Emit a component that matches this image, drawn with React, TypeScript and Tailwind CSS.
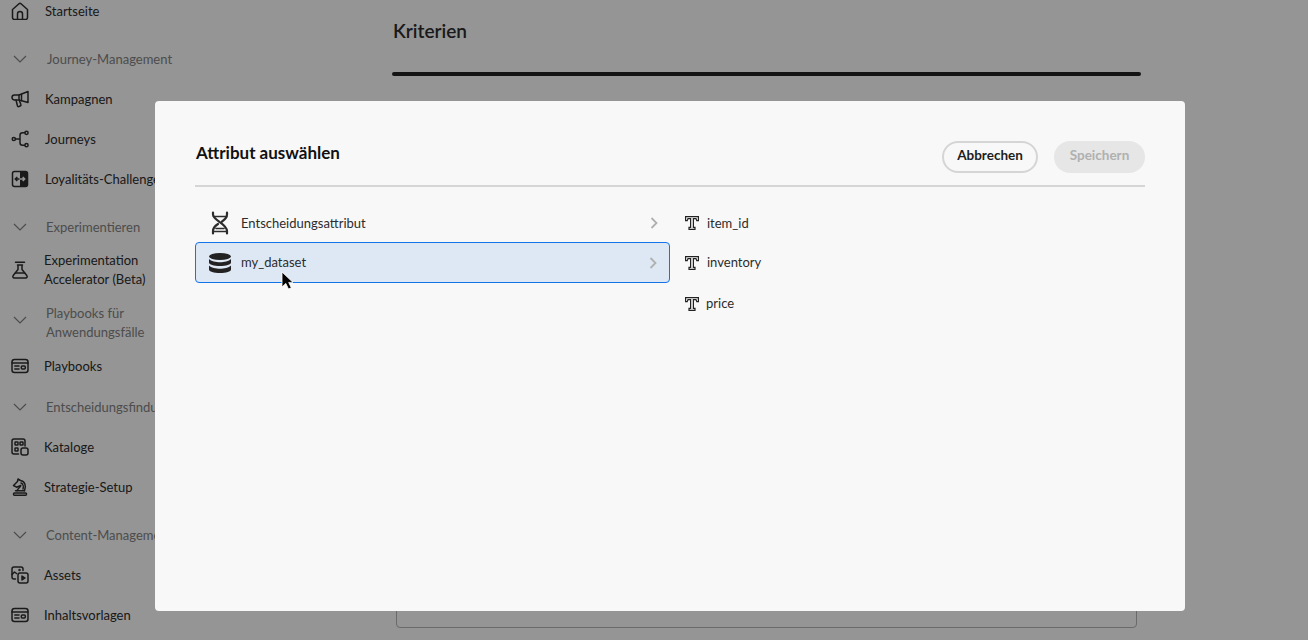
import type { ReactNode } from "react";

const stroke = {
  fill: "none",
  stroke: "currentColor",
  strokeWidth: 1.5,
  strokeLinecap: "round" as const,
  strokeLinejoin: "round" as const,
};

function Icon({ children }: { children: ReactNode }) {
  return (
    <svg viewBox="0 0 18 18" className="size-[18px] shrink-0" {...stroke}>
      {children}
    </svg>
  );
}

const HomeIcon = () => (
  <Icon>
    <path d="M1.500 7.500 8 1.800a1.500 1.500 0 0 1 2 0l6.500 5.700V15.500a2 2 0 0 1-2 2h-11a2 2 0 0 1-2-2z" />
    <path d="M6.500 17.500V12a2.500 2.500 0 0 1 5 0v5.500" />
  </Icon>
);
const MegaphoneIcon = () => (
  <Icon>
    <path d="M17 1.500v11L8 10H3.500a2.500 2.500 0 0 1 0-5H8z" />
    <path d="M8 5v5M10.500 4.200v6.500" />
    <path d="M5 10l1.500 6a1 1 0 0 0 1.500.500l1.500-.700a1 1 0 0 0 .400-1.300L8.500 11" />
  </Icon>
);
const JourneyIcon = () => (
  <Icon>
    <circle cx="2.800" cy="9" r="1.600" />
    <circle cx="15.500" cy="2.800" r="1.600" />
    <circle cx="15.500" cy="15.200" r="1.600" />
    <path d="M4.500 9h4.500M13.800 2.800H11.500A2.500 2.500 0 0 0 9 5.300v7.400a2.500 2.500 0 0 0 2.500 2.500h2.300" />
  </Icon>
);
const ChallengeIcon = () => (
  <svg viewBox="0 0 18 18" className="size-[18px] shrink-0">
    <rect x="1.500" y="1.500" width="15" height="15" rx="2" fill="none" stroke="currentColor" strokeWidth="1.500" />
    <path d="M9 1.500h5.500a2 2 0 0 1 2 2v11a2 2 0 0 1-2 2H9z" fill="currentColor" />
    <path d="M8.500 9H4.500M6.300 7 4.300 9l2 2" fill="none" stroke="currentColor" strokeWidth="1.500" />
    <path d="M9 9h4.500M11.700 7l2 2-2 2" fill="none" stroke="#f8f8f8" strokeWidth="1.500" />
  </svg>
);
const FlaskIcon = () => (
  <Icon>
    <path d="M4.500 1.200h9M6.500 4h5M7 4v4.500L2.200 14.500a1.500 1.500 0 0 0 1.200 2.500h11.200a1.500 1.500 0 0 0 1.200-2.500L11 8.500V4" />
    <path d="M4.500 12h9" />
  </Icon>
);
const PlaybookIcon = () => (
  <Icon>
    <rect x="1" y="2.500" width="16" height="13" rx="2.500" />
    <path d="M1 6h16M3.800 9h4.200M3.800 12h4.200" />
    <rect x="10.300" y="9" width="4" height="3" rx="1" />
  </Icon>
);
const CatalogIcon = () => (
  <Icon>
    <path d="M7.500 16H3a2 2 0 0 1-2-2V3a2 2 0 0 1 2-2h9a2 2 0 0 1 2 2v5" />
    <rect x="4" y="4" width="3" height="3" rx=".5" />
    <rect x="9" y="4" width="3" height="3" rx=".5" />
    <rect x="4" y="10" width="3" height="3" rx=".5" />
    <rect x="10" y="10" width="7" height="7" rx="2" />
  </Icon>
);
const KnightIcon = () => (
  <Icon>
    <rect x="2.500" y="15" width="13" height="2.200" rx="1" />
    <path d="M4.500 12.800h9" />
    <path d="M6 12.800c0-2 3.500-3 3.800-5.300L5.500 9.200 2.500 7.500 6.500 3.500 7 1l2.500 1.500c4.500.8 6 5.500 4 10.300" />
    <path d="M10 5c2 .8 2.800 3.500 2 6" />
  </Icon>
);
const AssetsIcon = () => (
  <Icon>
    <path d="M4.500 13H3a2 2 0 0 1-2-2V3a2 2 0 0 1 2-2h7a2 2 0 0 1 2 2v1.500" />
    <path d="M1 8.500l2.500-2.500 2 1.500" />
    <circle cx="8.500" cy="4" r=".5" />
    <rect x="7" y="7" width="10" height="10" rx="2" />
    <path d="M11 10v4l3-2z" fill="currentColor" />
  </Icon>
);
const ChevronDown = ({ className = "" }: { className?: string }) => (
  <svg viewBox="0 0 14 8" className={`h-2 w-3.5 shrink-0 text-[#808080] ${className}`} fill="none" stroke="currentColor" strokeWidth="1.200">
    <path d="M1 1l6 6 6-6" />
  </svg>
);
const ChevronRight = () => (
  <svg viewBox="0 0 8 12" className="h-3 w-2 shrink-0 text-[#b0b0b0]" fill="none" stroke="currentColor" strokeWidth="1.800">
    <path d="M1.500 1l5 5-5 5" />
  </svg>
);
const DnaIcon = () => (
  <svg viewBox="0 0 20 24" className="h-6 w-5 shrink-0 text-[#2c2c2c]" fill="none" stroke="currentColor" strokeWidth="2.200" strokeLinecap="round">
    <path d="M3 1.500v2c0 6 14 9 14 16.500v2.500M17 1.500v2c0 3-2 5-5 7M8 13c-3 2-5 4-5 7v2.500" />
    <path d="M3.500 5.500h13M6 17.500h8M3.500 20.500h13" strokeWidth="1.600" />
  </svg>
);
const DatabaseIcon = () => (
  <svg viewBox="0 0 22 20" className="h-5 w-[22px] shrink-0 text-[#222222]" fill="currentColor">
    <ellipse cx="11" cy="3.500" rx="11" ry="3.500" />
    <path d="M0 6c2 2.500 7 3.200 11 3.200S20 8.500 22 6v3.500c0 2-5 3.500-11 3.500S0 11.500 0 9.500z" />
    <path d="M0 12.500c2 2.500 7 3.200 11 3.200s9-.7 11-3.200v4c0 2-5 3.500-11 3.500S0 18.500 0 16.500z" />
  </svg>
);
const TypeIcon = () => (
  <svg viewBox="0 0 14 14" className="size-[14px] shrink-0 text-[#222222]" fill="none" stroke="currentColor" strokeWidth="1.200">
    <path d="M.6.6h12.800v4h-1.600l-.8-2H8.400v8.800h1.600v2H4v-2h1.600V2.600H3l-.8 2H.6z" />
  </svg>
);

type NavEntry =
  | { kind: "item"; label: ReactNode; icon: ReactNode; className: string; labelClass?: string }
  | { kind: "section"; label: ReactNode; className: string; chevron?: string; labelClass?: string };

const nav: NavEntry[] = [
  { kind: "item", label: "Startseite", icon: <HomeIcon />, className: "h-10", labelClass: "ml-px" },
  { kind: "section", label: "Journey-Management", className: "h-10 mt-2", labelClass: "ml-px" },
  { kind: "item", label: "Kampagnen", icon: <MegaphoneIcon />, className: "h-10", labelClass: "ml-px" },
  { kind: "item", label: "Journeys", icon: <JourneyIcon />, className: "h-10", labelClass: "ml-px" },
  { kind: "item", label: "Loyalitäts-Challenges", icon: <ChallengeIcon />, className: "h-10", labelClass: "ml-px" },
  { kind: "section", label: "Experimentieren", className: "h-10 mt-2" },
  { kind: "item", label: <>Experimentation<br />Accelerator (Beta)</>, icon: <FlaskIcon />, className: "h-[46px]" },
  { kind: "section", label: <>Playbooks für<br />Anwendungsfälle</>, className: "h-[46px] mt-[7px]", chevron: "-mt-1.5" },
  { kind: "item", label: "Playbooks", icon: <PlaybookIcon />, className: "h-10" },
  { kind: "section", label: "Entscheidungsfindung", className: "h-10 mt-px" },
  { kind: "item", label: "Kataloge", icon: <CatalogIcon />, className: "h-10" },
  { kind: "item", label: "Strategie-Setup", icon: <KnightIcon />, className: "h-10" },
  { kind: "section", label: "Content-Management", className: "h-10 mt-2" },
  { kind: "item", label: "Assets", icon: <AssetsIcon />, className: "h-10" },
  { kind: "item", label: "Inhaltsvorlagen", icon: <PlaybookIcon />, className: "h-10" },
];

function Sidebar() {
  return (
    <nav className="-mt-[9px] w-[360px] shrink-0 pl-[11px]">
      {nav.map((entry, i) =>
        entry.kind === "item" ? (
          <div key={i} className={`flex items-center gap-[15px] text-[#2c2c2c] ${entry.className}`}>
            {entry.icon}
            <span className={`leading-[19px] ${entry.labelClass ?? ""}`}>{entry.label}</span>
          </div>
        ) : (
          <div key={i} className={`flex items-center gap-[19px] pl-0.5 text-[#808080] ${entry.className}`}>
            <ChevronDown className={entry.chevron} />
            <span className={`leading-[19px] ${entry.labelClass ?? ""}`}>{entry.label}</span>
          </div>
        )
      )}
    </nav>
  );
}

function AttributeDialog() {
  return (
    <div className="absolute inset-0 bg-black/40 pl-[155px] pt-[101px]">
      <div className="flex h-[510px] w-[1030px] flex-col rounded bg-[#f8f8f8] px-10 pt-10">
        <header className="flex h-[46px] items-start justify-between border-b-2 border-[#d5d5d5]">
          <h2 className="pl-px text-[17px] leading-6 font-bold text-[#111111]">Attribut auswählen</h2>
          <div className="flex gap-4">
            <button className="h-8 w-24 rounded-full border-2 border-[#d5d5d5] pb-1 text-[13.5px] font-bold text-[#1d1d1d]">Abbrechen</button>
            <button className="h-8 w-[91px] rounded-full bg-[#e6e6e6] pb-1 text-[13.5px] font-bold text-[#b0b0b0]">Speichern</button>
          </div>
        </header>

        <div className="flex pt-4">
          <div className="w-[475px] shrink-0">
            <div className="flex h-[39px] items-center gap-[11px] pr-3 pl-[15px] text-[#2c2c2c]">
              <DnaIcon />
              <span className="mt-0.5 flex-1">Entscheidungsattribut</span>
              <ChevronRight />
            </div>
            <div className="relative flex h-[41px] items-center gap-[10px] rounded-sm border border-[#1473e6] bg-[#deE8f5] pr-3 pl-[13px] text-[#2c2c2c]">
              <DatabaseIcon />
              <span className="flex-1">my_dataset</span>
              <ChevronRight />
              <svg viewBox="0 0 13 19" className="absolute top-[28px] left-[85px] h-[19px] w-[13px]">
                <path d="M1 1v15l3.800-3.600 2.700 5.600 2.800-1.200-2.600-5.400H12z" fill="#000000" stroke="#ffffff" strokeWidth=".8" />
              </svg>
            </div>
          </div>
          <ul className="pl-[15px] text-[#2c2c2c]">
            <li className="flex h-[39px] items-center gap-2"><TypeIcon /><span className="mt-0.5">item_id</span></li>
            <li className="flex h-[41px] items-center gap-2"><TypeIcon /><span>inventory</span></li>
            <li className="flex h-[41px] items-center gap-[7px]"><TypeIcon /><span>price</span></li>
          </ul>
        </div>
      </div>
    </div>
  );
}

export default function App() {
  return (
    <div className="relative flex h-[640px] w-[1308px] overflow-hidden bg-[#f8f8f8] font-['Lato',sans-serif] text-[13px]">
      <Sidebar />
      <main className="flex w-[749px] flex-col pl-8">
        <h1 className="pt-[17px] pl-px text-[19px] leading-[27px] font-semibold text-[#2c2c2c]">Kriterien</h1>
        <div className="mt-7 h-1 w-[749px] rounded-full bg-[#222222]" />
        <div className="mt-auto mb-3 ml-1 h-20 w-[741px] rounded border border-[#b1b1b1]" />
      </main>
      <AttributeDialog />
    </div>
  );
}
